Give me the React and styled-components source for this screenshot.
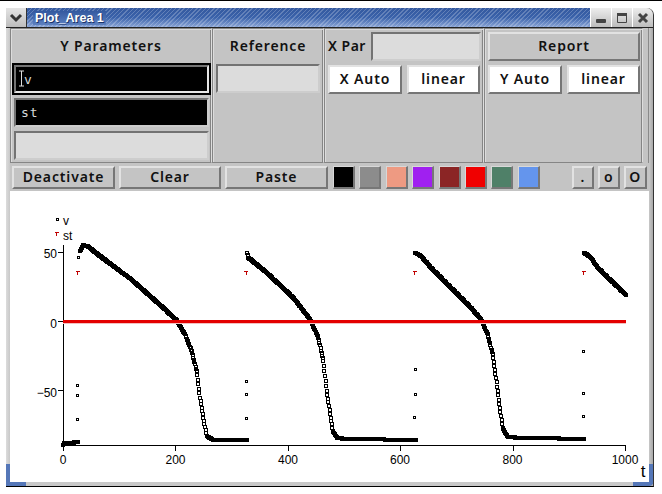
import React from "react";
import styled, { createGlobalStyle } from "styled-components";

const Global = createGlobalStyle`
  html, body { margin: 0; padding: 0; background: #fff; overflow: hidden; }
  #root { width: 662px; height: 494px; }
`;

const uiFont = `600 14px "Noto Sans", "Liberation Sans", sans-serif`;

const Page = styled.div`
  width: 662px;
  height: 494px;
  box-sizing: border-box;
  border-top: 1px solid #000;
  padding: 7px 0 0 6px;
  background: #fff;
`;

const Window = styled.div`
  position: relative;
  width: 648px;
  height: 479px;
  box-sizing: border-box;
  display: flex;
  flex-direction: column;
  background: #c4c4c4;
  border-top-right-radius: 7px;
  border-bottom: 1px solid #000;
  border-right: 1px solid #333;
`;

const TitleBar = styled.div`
  height: 19px;
  flex: none;
  display: flex;
  border-bottom: 1px solid #222;
`;

const MenuButton = styled.div`
  width: 20px;
  flex: none;
  display: flex;
  align-items: center;
  justify-content: center;
  background: linear-gradient(#e4e4e4, #bdbdbd);
  border-right: 1px solid #333;
`;

const TitleStrip = styled.div`
  flex: 1;
  display: flex;
  align-items: center;
  padding-left: 6px;
  background:
    repeating-linear-gradient(135deg, rgba(255,255,255,0.22) 0 1px, transparent 1px 3px),
    linear-gradient(#34599f, #3a62aa 50%, #8aa5d6);
`;

const TitleText = styled.span`
  font: bold 12.5px "Liberation Sans", sans-serif;
  color: #fff;
  padding: 0 2px;
  background: linear-gradient(#34599f, #5c80c0);
  text-shadow: 1px 1px 0 #1c3268;
`;

const WinButton = styled.div`
  width: 20px;
  flex: none;
  display: flex;
  align-items: center;
  justify-content: center;
  background: linear-gradient(#ededed, #bcbcbc);
  border-left: 1px solid #fff;
  &:last-child { border-top-right-radius: 7px; }
`;

const Body = styled.div`
  flex: 1;
  display: flex;
  flex-direction: column;
  padding: 0 4px 4px 4px;
  min-height: 0;
  background: linear-gradient(90deg, #dcdcdc, #c8c8c8 4px, #c8c8c8 calc(100% - 4px), #a8a8a8);
`;

const TopGroup = styled.div`
  height: 135px;
  flex: none;
  display: flex;
  background: #c4c4c4;
  padding-right: 6px;
  box-shadow: inset -2px 0 0 -1px #8a8a8a;
`;

const Panel = styled.div`
  box-sizing: border-box;
  width: ${(p) => p.$w}px;
  flex: none;
  border: 1px solid #858585;
  border-right-color: #dedede;
  box-shadow: inset 1px 1px 0 #dcdcdc, inset -1px 0 0 #858585;
  padding: ${(p) => p.$pad || "0"};
  display: flex;
  flex-direction: column;
`;

const Heading = styled.div`
  height: 34px;
  box-sizing: border-box;
  padding-bottom: 1px;
  flex: none;
  display: flex;
  align-items: center;
  justify-content: center;
  font: ${uiFont};
  letter-spacing: 0.85px;
  color: #111;
`;

const Field = styled.div`
  box-sizing: border-box;
  position: relative;
  height: 29px;
  width: ${(p) => (p.$w ? `${p.$w}px` : "auto")};
  margin: ${(p) => p.$m || "0"};
  flex: none;
  background: ${(p) => (p.$dark ? "#000" : "#dcdcdc")};
  border-style: solid;
  border-width: 2px;
  border-color: #737373 #cdcdcd #cdcdcd #737373;
  color: #d8d8d8;
  font: 13px "DejaVu Sans Mono", monospace;
  letter-spacing: 1px;
  line-height: 26px;
  padding-left: 5px;
`;

const FocusRing = styled.div`
  box-sizing: border-box;
  height: 32px;
  margin: 0 0 0 1px;
  border: 2px solid #000;
  & > div { height: 28px; border-color: #737373 #e6e6e6 #e6e6e6 #737373; }
`;

const CursorMark = styled.svg`
  position: absolute;
  left: 2px;
  top: 3px;
`;

const CursorText = styled.span`
  margin-left: 3px;
`;

const Row = styled.div`
  display: flex;
  gap: 5px;
  margin: ${(p) => p.$m || "0"};
  align-items: center;
`;

const Label = styled.span`
  font: ${uiFont};
  letter-spacing: 0.5px;
  color: #111;
  width: 38px;
  white-space: nowrap;
  padding-bottom: 2px;
`;

const Button = styled.div`
  box-sizing: border-box;
  width: ${(p) => (p.$w ? `${p.$w}px` : "auto")};
  height: ${(p) => p.$h || 29}px;
  flex: none;
  display: flex;
  align-items: center;
  justify-content: center;
  padding-bottom: 2px;
  background: ${(p) => (p.$white ? "#fff" : "#c4c4c4")};
  border-style: solid;
  border-width: 2px;
  border-color: #e2e2e2 #767676 #767676 #e2e2e2;
  font: ${uiFont};
  letter-spacing: 0.85px;
  color: #111;
`;

const Toolbar = styled.div`
  height: 28px;
  flex: none;
  display: flex;
  align-items: center;
  padding: 1px 0 0 2px;
  box-sizing: border-box;
  background: #c4c4c4;
`;

const Actions = styled.div`
  display: flex;
  gap: 4px;
  margin-right: 5px;
`;

const Swatches = styled.div`
  display: flex;
  gap: 4.4px;
`;

const Swatch = styled.div`
  box-sizing: border-box;
  width: 22px;
  height: 23px;
  background: ${(p) => p.$c};
  border-style: solid;
  border-width: 1px 2px 2px 1px;
  border-color: #d8d8d8 #777 #777 #d8d8d8;
`;

const Marks = styled.div`
  display: flex;
  gap: 4px;
  margin-left: 32px;
`;

const Canvas = styled.div`
  flex: 1;
  background: #fff;
  min-height: 0;
  & > svg { display: block; }
`;

const GripV = styled.div`
  position: absolute;
  bottom: 2px;
  width: 4px;
  height: 20px;
  background: #5577b8;
  ${(p) => (p.$right ? "right: 0;" : "left: 0;")}
`;

const GripH = styled.div`
  position: absolute;
  bottom: 0;
  width: 20px;
  height: 4px;
  background: #5577b8;
  ${(p) => (p.$right ? "right: 0; border-bottom-right-radius: 4px;" : "left: 0;")}
`;

const PlotText = styled.text`
  font: ${(p) => p.$size || 12}px "Liberation Sans", sans-serif;
  fill: #000;
  text-anchor: ${(p) => p.$anchor || "middle"};
`;

const z1 = (x, y) => [x / 3, 200 + y / 3];
const z2 = (x, y) => [331 + x / 3, 200 + y / 3];

const curves = [
  [[63, 443.5], [64, 442], [78, 441.3]],
  [[240, 150], [250, 133], [262, 135], [300, 165], [400, 240], [500, 330], [530, 358], [555, 400], [575, 450], [590, 510], [600, 590], [610, 650], [620, 705], [640, 717], [740, 718]].map(([x, y]) => z1(x, y)),
  [...[[742, 155], [745, 170], [800, 215], [880, 290], [930, 355], [955, 410], [970, 480], [980, 570], [992, 650]].map(([x, y]) => z1(x, y)), ...[[5, 690], [20, 712], [70, 714], [190, 716], [255, 718]].map(([x, y]) => z2(x, y))],
  [[253, 155], [270, 165], [300, 200], [380, 280], [420, 320], [450, 355], [470, 400], [485, 460], [495, 530], [505, 610], [515, 680], [530, 708], [560, 710], [670, 712], [760, 715]].map(([x, y]) => z2(x, y)),
  [[760, 155], [780, 170], [800, 200], [885, 282]].map(([x, y]) => z2(x, y)),
];

const sample = (pts) => {
  const out = [];
  for (let i = 0; i < pts.length - 1; i++) {
    const [x0, y0] = pts[i];
    const [x1, y1] = pts[i + 1];
    const n = Math.max(1, Math.round((x1 - x0) / 0.5627));
    for (let k = 0; k < n; k++) out.push([x0 + ((x1 - x0) * k) / n, y0 + ((y1 - y0) * k) / n]);
  }
  out.push(pts[pts.length - 1]);
  return out;
};

const vPoints = curves.flatMap(sample);
const vLoose = [
  z1(232, 655), z1(232, 583), z1(232, 553), z1(235, 169),
  z1(739, 652), z1(739, 580), z1(739, 541),
  z2(250, 649), z2(253, 580), z2(253, 505),
  z2(757, 646), z2(757, 577), z2(757, 451),
];
const stMarks = [[77.5, 272], [246, 272], [414.5, 272], [583.5, 272]];

const Dot = ({ p, size = 2 }) => (
  <rect x={Math.round(p[0]) - 0.5 - (size - 2)} y={Math.round(p[1]) - 0.5 - (size - 2)} width={size} height={size} fill="none" stroke="#000" strokeWidth="1" shapeRendering="crispEdges" />
);

const Tee = ({ x, y }) => (
  <path d={`M${x - 2} ${y - 1.5}h4M${x} ${y - 1.5}v3`} stroke="#c00000" strokeWidth="1" fill="none" shapeRendering="crispEdges" />
);

const Plot = () => (
  <svg width="639" height="291" viewBox="10 190 639 291">
    <path d="M63 244V444H625.5M58 251h5M58 320.5h5M58 389.5h5M63 444v6M175.5 444v6M288 444v6M400.5 444v6M513 444v6M625.5 444v6" stroke="#000" strokeWidth="1" fill="none" shapeRendering="crispEdges" />
    {[["50", 251], ["0", 320.5], ["\u221250", 389.5]].map(([t, y]) => (
      <PlotText key={t} x="57" y={y + 6} $anchor="end">{t}</PlotText>
    ))}
    {[["0", 63], ["200", 175.5], ["400", 288], ["600", 400], ["800", 512.5], ["1000", 625]].map(([t, x]) => (
      <PlotText key={t} x={x} y="463">{t}</PlotText>
    ))}
    <PlotText x="643" y="476" $size={17}>t</PlotText>
    <Dot p={[56.5, 217.5]} />
    <Tee x={56.5} y={233} />
    <PlotText x="63" y="224" $anchor="start">v</PlotText>
    <PlotText x="63" y="239" $anchor="start">st</PlotText>
    {stMarks.map(([x, y]) => <Tee key={x} x={x} y={y} />)}
    {vLoose.map((p, i) => <Dot key={i} p={p} />)}
    {vPoints.map((p, i) => <Dot key={i} p={p} size={3} />)}
    <path d="M63 319h563v3H63z" fill="#e40000" />
    <path d="M63 322h563v1H63z" fill="#f3c0c0" />
  </svg>
);

const colors = ["#000000", "#8c8c8c", "#ee9a82", "#a020f0", "#8b2525", "#f00000", "#4f8068", "#6495ed"];

export default function App() {
  return (
    <Page>
      <Global />
      <Window>
        <TitleBar>
          <MenuButton>
            <svg width="14" height="10" viewBox="0 0 14 10">
              <path d="M2 2l5 5 5-5" stroke="#333" strokeWidth="3" fill="none" />
            </svg>
          </MenuButton>
          <TitleStrip><TitleText>Plot_Area 1</TitleText></TitleStrip>
          <WinButton>
            <svg width="12" height="12" viewBox="0 0 12 12"><rect x="1" y="7" width="10" height="4" rx="1" fill="#444" /></svg>
          </WinButton>
          <WinButton>
            <svg width="12" height="12" viewBox="0 0 12 12"><path d="M1.5 1.5h9v9h-9z" stroke="#444" fill="none" /><path d="M1 1h10v3H1z" fill="#444" /></svg>
          </WinButton>
          <WinButton>
            <svg width="12" height="12" viewBox="0 0 12 12"><path d="M2 2l8 8M10 2l-8 8" stroke="#444" strokeWidth="3" /></svg>
          </WinButton>
        </TitleBar>
        <Body>
          <TopGroup>
            <Panel $w={202}>
              <Heading>Y Parameters</Heading>
              <FocusRing>
                <Field $dark>
                  <CursorMark width="8" height="18" viewBox="0 0 8 18">
                    <path d="M1 1h5M1 16h5M3.5 1v15" stroke="#ddd" fill="none" />
                  </CursorMark>
                  <CursorText>v</CursorText>
                </Field>
              </FocusRing>
              <Field $dark $m="3px 2px 0 3px">st</Field>
              <Field $m="4px 2px 0 3px" />
            </Panel>
            <Panel $w={112}>
              <Heading>Reference</Heading>
              <Field $m="1px 3px 0 3px" />
            </Panel>
            <Panel $w={160} $pad="3px 2px 0 3px">
              <Row>
                <Label>X Par</Label>
                <Field $w={110} />
              </Row>
              <Row $m="4px 0 0">
                <Button $white $w={74}>X Auto</Button>
                <Button $white $w={73}>linear</Button>
              </Row>
            </Panel>
            <Panel $w={159} $pad="3px 2px 0 3px">
              <Button>Report</Button>
              <Row $m="4px 0 0">
                <Button $white $w={74}>Y Auto</Button>
                <Button $white $w={73}>linear</Button>
              </Row>
            </Panel>
          </TopGroup>
          <Toolbar>
            <Actions>
              <Button $w={103} $h={23}>Deactivate</Button>
              <Button $w={102} $h={23}>Clear</Button>
              <Button $w={103} $h={23}>Paste</Button>
            </Actions>
            <Swatches>
              {colors.map((c) => <Swatch key={c} $c={c} />)}
            </Swatches>
            <Marks>
              <Button $w={22} $h={23}>.</Button>
              <Button $w={22} $h={23}>o</Button>
              <Button $w={23} $h={23}>O</Button>
            </Marks>
          </Toolbar>
          <Canvas><Plot /></Canvas>
        </Body>
        <GripV />
        <GripH />
        <GripV $right />
        <GripH $right />
      </Window>
    </Page>
  );
}
